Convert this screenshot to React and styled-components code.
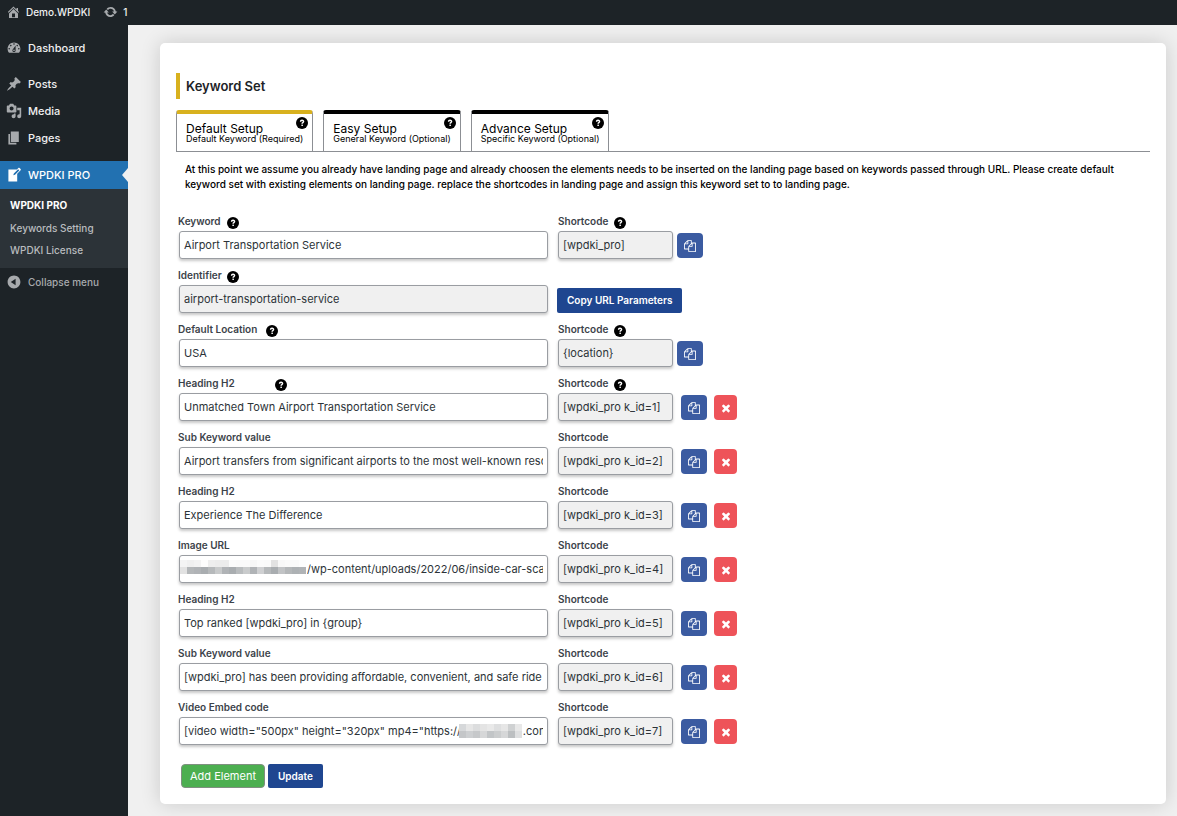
import React from 'react';
import styled, { createGlobalStyle } from 'styled-components';

const icons = {
  home: 'M16 8.5l1.53 1.53-1.06 1.06L10 4.6l-6.47 6.49-1.06-1.06L10 2.5l4 4v-2h2v4zm-6-2.46l6 5.99V18H4v-5.97zM12 17v-5H8v5h4z',
  update:
    'M10.2 3.28c3.53 0 6.43 2.61 6.92 6h2.08l-3.5 4-3.5-4h2.32c-.45-1.97-2.21-3.45-4.32-3.45-1.45 0-2.73.71-3.54 1.78L4.95 5.66C6.23 4.2 8.11 3.28 10.2 3.28zm-.4 13.44c-3.52 0-6.43-2.61-6.92-6H.8l3.5-4c1.17 1.33 2.33 2.67 3.5 4H5.48c.45 1.97 2.21 3.45 4.32 3.45 1.45 0 2.73-.71 3.54-1.78l1.71 1.95c-1.28 1.46-3.15 2.38-5.25 2.38z',
  dashboard:
    'M3.76 16h12.48c1.1-1.37 1.76-3.11 1.76-5 0-4.42-3.58-8-8-8s-8 3.58-8 8c0 1.89.66 3.63 1.76 5zM10 4c.55 0 1 .45 1 1s-.45 1-1 1-1-.45-1-1 .45-1 1-1zM6 6c.55 0 1 .45 1 1s-.45 1-1 1-1-.45-1-1 .45-1 1-1zm8 0c.55 0 1 .45 1 1s-.45 1-1 1-1-.45-1-1 .45-1 1-1zm-5.37 5.55L12 7v6c0 1.1-.9 2-2 2s-2-.9-2-2c0-.57.24-1.08.63-1.45zM4 10c.55 0 1 .45 1 1s-.45 1-1 1-1-.45-1-1 .45-1 1-1zm12 0c.55 0 1 .45 1 1s-.45 1-1 1-1-.45-1-1 .45-1 1-1zm-5 3c0-.55-.45-1-1-1s-1 .45-1 1 .45 1 1 1 1-.45 1-1z',
  post: 'M10.44 3.02l1.82-1.82 6.36 6.35-1.83 1.82c-1.05-.68-2.48-.57-3.41.36l-.75.75c-.92.93-1.04 2.35-.35 3.41l-1.83 1.82-2.41-2.41-2.8 2.79c-.42.42-3.38 2.71-3.8 2.29s1.86-3.39 2.28-3.81l2.79-2.79L4.1 9.36l1.83-1.82c1.05.69 2.48.57 3.4-.36l.75-.75c.93-.92 1.05-2.35.36-3.41z',
  media:
    'M13 11V4c0-.55-.45-1-1-1h-1.67L9 1H5L3.67 3H2c-.55 0-1 .45-1 1v7c0 .55.45 1 1 1h10c.55 0 1-.45 1-1zM7 4.5c1.38 0 2.5 1.12 2.5 2.5S8.38 9.5 7 9.5 4.5 8.38 4.5 7 5.62 4.5 7 4.5zM14 6h5v10.5c0 1.38-1.12 2.5-2.5 2.5S14 17.88 14 16.5s1.12-2.5 2.5-2.5c.17 0 .34.02.5.05V9h-3V6zm-4 8.05V13h2v3.5c0 1.38-1.12 2.5-2.5 2.5S7 17.88 7 16.5 8.12 14 9.5 14c.17 0 .34.02.5.05z',
  page: 'M6 15V2h10v13H6zm-1 1h8v2H3V5h2v11z',
  write:
    'M16.89 1.2l1.41 1.41c.39.39.39 1.02 0 1.41L14 8.33V18H3V3h10.67l1.8-1.8c.4-.39 1.03-.4 1.42 0zm-5.66 8.48l5.37-5.36-1.42-1.42-5.36 5.37-.71 2.12z',
  collapse: 'M10 2c4.42 0 8 3.58 8 8s-3.58 8-8 8-8-3.58-8-8 3.58-8 8-8zm2 12V6l-6 4z',
};

const filesPath =
  'M1696 384q40 0 68 28t28 68v1216q0 40-28 68t-68 28h-960q-40 0-68-28t-28-68v-288h-544q-40 0-68-28t-28-68v-672q0-40 20-88t48-76l408-408q28-28 76-48t88-20h416q40 0 68 28t28 68v328q68-40 128-40h416zm-544 213l-299 299h299v-299zm-640-384l-299 299h299v-299zm196 647l316-316v-416h-384v416q0 40-28 68t-68 28h-416v640h512v-256q0-40 20-88t48-76zm956 804v-1152h-384v416q0 40-28 68t-68 28h-416v640h896z';
const timesPath =
  'M1490 1322q0 40-28 68l-136 136q-28 28-68 28t-68-28l-294-294-294 294q-28 28-68 28t-68-28l-136-136q-28-28-28-68t28-68l294-294-294-294q-28-28-28-68t28-68l136-136q28-28 68-28t68 28l294 294 294-294q28-28 68-28t68 28l136 136q28 28 28 68t-28 68l-294 294 294 294q28 28 28 68z';

const menu = [
  { label: 'Dashboard', icon: 'dashboard', gap: true },
  { label: 'Posts', icon: 'post' },
  { label: 'Media', icon: 'media' },
  { label: 'Pages', icon: 'page' },
];

const tabs = [
  { title: 'Default Setup', sub: 'Default Keyword (Required)', active: true },
  { title: 'Easy Setup', sub: 'General Keyword (Optional)' },
  { title: 'Advance Setup', sub: 'Specific Keyword (Optional)' },
];

const hostMask = {
  left: 1,
  top: 5,
  cell: 7,
  rows: [
    ['#f4f4f4', '#f0f0f0', '#f3f3f3', '#fdfdfd', '#eeeeee', '#ececec', '#ececec', '#fbfbfb', '#fafafa', '#fafafa', '#f7f7f7', '#fbfbfb', '#fafafa', '#e2e2e2', '#f8f8f8', '#fafafa', '#fafafa', '#fdfdfd'],
    ['#e2e2e2', '#b4b7b9', '#b0b3b6', '#a9adb0', '#b6b9bb', '#c8cacb', '#b0b3b6', '#a9adb0', '#b9bcbe', '#c9cbcc', '#b0b3b6', '#cfd0d2', '#b6b9bb', '#a9adb0', '#c1c3c5', '#b4b7b9', '#adb1b4', '#b0b3b6'],
  ],
};
const domainMask = {
  left: 280,
  top: 7,
  cell: 7,
  rows: [
    ['#d6d8da', '#e6e6e6', '#dcddde', '#e4e4e4', '#e9e9e9', '#dedfe0', '#e6e6e6', '#cfd1d2', '#e8e8e8'],
    ['#c4c6c8', '#cdcfd1', '#c6c8ca', '#d6d7d8', '#c2c5c7', '#cbcdce', '#d6d7d8', '#bcbfc1', '#dedfe0'],
  ],
};

const rows = [
  { label: 'Keyword', value: 'Airport Transportation Service', help: 6, code: '[wpdki_pro]', codeHelp: true },
  { label: 'Identifier', value: 'airport-transportation-service', help: 5, readOnly: true, url: true },
  { label: 'Default Location', value: 'USA', help: 9, code: '{location}', codeHelp: true },
  { label: 'Heading H2', value: 'Unmatched Town Airport Transportation Service', help: 40, code: '[wpdki_pro k_id=1]', codeHelp: true, remove: true },
  { label: 'Sub Keyword value', value: 'Airport transfers from significant airports to the most well-known resorts', code: '[wpdki_pro k_id=2]', remove: true },
  { label: 'Heading H2', value: 'Experience The Difference', code: '[wpdki_pro k_id=3]', remove: true },
  { label: 'Image URL', value: '/wp-content/uploads/2022/06/inside-car-scaled.jpg', indent: 127, mask: hostMask, code: '[wpdki_pro k_id=4]', remove: true },
  { label: 'Heading H2', value: 'Top ranked [wpdki_pro] in {group}', code: '[wpdki_pro k_id=5]', remove: true },
  { label: 'Sub Keyword value', value: '[wpdki_pro] has been providing affordable, convenient, and safe ride home', code: '[wpdki_pro k_id=6]', remove: true },
  {
    label: 'Video Embed code',
    value: `[video width="500px" height="320px" mp4="https://${'\u00a0'.repeat(20)}.com/video.mp4"]`,
    mask: domainMask,
    code: '[wpdki_pro k_id=7]',
    remove: true,
  },
];

const Dashicon = ({ name }) => (
  <svg width='16' height='16' viewBox='0 0 20 20' fill='currentColor' aria-hidden='true'>
    <path d={icons[name]} fillRule='evenodd' />
  </svg>
);

const HelpIcon = () => (
  <svg width='12' height='12' viewBox='0 0 12 12' aria-hidden='true'>
    <circle cx='6' cy='6' r='6' fill='#000' />
    <path d='M4.5 4.8c0-2 3.1-1.9 3.1-.3 0 1.1-1.5 1.1-1.5 2.2' fill='none' stroke='#fff' strokeWidth='1.4' />
    <rect x='5.4' y='7.6' width='1.5' height='1.4' fill='#fff' />
  </svg>
);

const Mosaic = ({ mask }) => (
  <MosaicSvg
    $left={mask.left}
    $top={mask.top}
    width={mask.rows[0].length * mask.cell}
    height={mask.rows.length * mask.cell}
    shapeRendering='crispEdges'
    aria-hidden='true'
  >
    {mask.rows.map((row, y) =>
      row.map((fill, x) => (
        <rect key={`${x}-${y}`} x={x * mask.cell} y={y * mask.cell} width={mask.cell} height={mask.cell} fill={fill} />
      ))
    )}
  </MosaicSvg>
);

const FieldRow = ({ row, index }) => (
  <Row>
    <Field>
      <LabelLine $gap={row.help}>
        <label htmlFor={`value-${index}`}>{row.label}</label>
        {row.help && <HelpIcon />}
      </LabelLine>
      <InputBox>
        <TextInput id={`value-${index}`} defaultValue={row.value} readOnly={row.readOnly} $indent={row.indent} />
        {row.mask && <Mosaic mask={row.mask} />}
      </InputBox>
    </Field>
    {row.url ? (
      <BlueButton type='button'>Copy URL Parameters</BlueButton>
    ) : (
      <>
        <CodeField>
          <LabelLine $gap={6}>
            <label htmlFor={`code-${index}`}>Shortcode</label>
            {row.codeHelp && <HelpIcon />}
          </LabelLine>
          <TextInput id={`code-${index}`} defaultValue={row.code} readOnly />
        </CodeField>
        <Actions $wide={row.remove}>
          <CopyButton type='button' aria-label='Copy shortcode'>
            <svg width='12' height='12' viewBox='0 0 1792 1792' fill='currentColor'>
              <path d={filesPath} />
            </svg>
          </CopyButton>
          {row.remove && (
            <RemoveButton type='button' aria-label='Remove element'>
              <svg width='12' height='12' viewBox='0 0 1792 1792' fill='currentColor'>
                <path d={timesPath} />
              </svg>
            </RemoveButton>
          )}
        </Actions>
      </>
    )}
  </Row>
);

const App = () => {
  return (
    <>
      <GlobalStyle />
      <Page>
        <TopBar>
          <TopLink href='#site'>
            <Dashicon name='home' />
            Demo.WPDKI
          </TopLink>
          <TopLink href='#updates'>
            <Dashicon name='update' />1
          </TopLink>
        </TopBar>
        <Body>
          <Sidebar>
            {menu.map((item) => (
              <MenuLink key={item.label} href={`#${item.label}`} $gap={item.gap}>
                <Dashicon name={item.icon} />
                {item.label}
              </MenuLink>
            ))}
            <CurrentLink href='#wpdki'>
              <Dashicon name='write' />
              WPDKI PRO
            </CurrentLink>
            <SubMenu>
              <SubLink href='#pro' $current>
                WPDKI PRO
              </SubLink>
              <SubLink href='#settings'>Keywords Setting</SubLink>
              <SubLink href='#license'>WPDKI License</SubLink>
            </SubMenu>
            <Collapse type='button'>
              <Dashicon name='collapse' />
              Collapse menu
            </Collapse>
          </Sidebar>
          <Content>
            <Card>
              <Title>Keyword Set</Title>
              <Tabs role='tablist'>
                {tabs.map((tab) => (
                  <Tab key={tab.title} type='button' role='tab' aria-selected={!!tab.active} $active={tab.active}>
                    <strong>{tab.title}</strong>
                    <small>{tab.sub}</small>
                    <HelpIcon />
                  </Tab>
                ))}
              </Tabs>
              <Intro>
                At this point we assume you already have landing page and already choosen the elements needs to be
                inserted on the landing page based on keywords passed through URL. Please create default keyword set
                with existing elements on landing page. replace the shortcodes in landing page and assign this keyword
                set to to landing page.
              </Intro>
              <form>
                {rows.map((row, index) => (
                  <FieldRow key={index} row={row} index={index} />
                ))}
                <Footer>
                  <AddButton type='button'>Add Element</AddButton>
                  <BlueButton type='button'>Update</BlueButton>
                </Footer>
              </form>
            </Card>
          </Content>
        </Body>
      </Page>
    </>
  );
};

const GlobalStyle = createGlobalStyle`
  *, *::before, *::after {
    box-sizing: border-box;
  }
  body {
    margin: 0;
    background: #f0f0f0;
    color: #1d2327;
  }
  body, button, input {
    font-family: Inter, 'Liberation Sans', sans-serif;
    font-size: 11px;
  }
  svg {
    flex: none;
  }
  a {
    text-decoration: none;
  }
  button {
    cursor: pointer;
  }
`;
const Page = styled.div`
  display: flex;
  flex-direction: column;
  min-height: 100vh;
`;
const TopBar = styled.header`
  display: flex;
  gap: 13px;
  height: 25px;
  padding: 0 6px;
  background: #1d2327;
`;
const TopLink = styled.a`
  display: flex;
  align-items: center;
  gap: 5px;
  height: 24px;
  color: #f0f0f1;
  font-size: 10px;
  font-weight: 500;
  svg {
    color: #a7aaad;
    width: 15px;
  }
`;
const Body = styled.div`
  display: flex;
  flex: 1;
`;
const Sidebar = styled.nav`
  flex: none;
  width: 128px;
  padding-top: 9px;
  background: #1d2327;
`;
const MenuLink = styled.a`
  display: flex;
  align-items: center;
  gap: 6px;
  height: 27px;
  margin-bottom: ${({ $gap }) => ($gap ? '9px' : '0')};
  padding-left: 6px;
  color: #f0f0f1;
  font-weight: 500;
  svg {
    color: #a7aaad;
  }
`;
const CurrentLink = styled(MenuLink)`
  position: relative;
  height: 28px;
  margin-top: 10px;
  background: #2271b1;
  color: #fff;
  svg {
    color: #fff;
  }
  &::after {
    content: '';
    position: absolute;
    right: 0;
    top: 7px;
    border: 7px solid transparent;
    border-left: 0;
    border-right: 6px solid #f0f0f0;
  }
`;
const SubMenu = styled.div`
  padding: 4px 0 7px;
  background: #2c3338;
`;
const SubLink = styled.a`
  display: block;
  padding-left: 10px;
  color: ${({ $current }) => ($current ? '#fff' : '#b9bcbf')};
  font-size: 10px;
  font-weight: ${({ $current }) => ($current ? 700 : 500)};
  line-height: ${({ $current }) => ($current ? '24px' : '22px')};
`;
const Collapse = styled.button`
  display: flex;
  align-items: center;
  gap: 6px;
  height: 27px;
  padding: 0 0 0 6px;
  border: 0;
  background: none;
  color: #a7aaad;
  font-size: 10px;
  font-weight: 500;
`;
const Content = styled.main`
  flex: 1;
  min-width: 0;
  padding: 18px 11px 12px 32px;
`;
const Card = styled.section`
  padding: 30px 16px 16px;
  border-radius: 5px;
  background: #fff;
  box-shadow: 0 0 20px rgba(0, 0, 0, 0.16);
`;
const Title = styled.h1`
  margin: 0 0 11px;
  padding-left: 6px;
  border-left: 4px solid #d8b11e;
  font-size: 13px;
  font-weight: 600;
  line-height: 26px;
`;
const Tabs = styled.div`
  display: flex;
  gap: 10px;
  border-bottom: 1px solid #8c8f94;
`;
const Tab = styled.button`
  position: relative;
  display: flex;
  flex-direction: column;
  height: 41px;
  margin-bottom: ${({ $active }) => ($active ? '-1px' : '0')};
  padding: 10px 9px 0;
  border: 1px solid #8c8f94;
  border-top: 4px solid ${({ $active }) => ($active ? '#d8b11e' : '#000')};
  border-bottom: 0;
  border-radius: 3px 3px 0 0;
  background: #fff;
  color: #000;
  text-align: left;
  strong {
    font-size: 12px;
    font-weight: 400;
    line-height: 10px;
  }
  small {
    font-size: 9px;
    line-height: 10px;
  }
  svg {
    position: absolute;
    top: 3px;
    right: 4px;
  }
`;
const Intro = styled.p`
  margin: 10px 10px 22px 9px;
  color: #000;
  font-size: 10px;
  font-weight: 500;
  line-height: 15px;
`;
const Row = styled.div`
  display: flex;
  align-items: flex-end;
  margin-bottom: 9px;
`;
const Field = styled.div`
  width: 372px;
  margin-right: 9px;
`;
const LabelLine = styled.div`
  display: flex;
  align-items: center;
  gap: ${({ $gap }) => $gap || 0}px;
  height: 17px;
  padding-left: 2px;
  color: #3c434a;
  font-size: 10px;
  font-weight: 600;
  label {
    padding-bottom: 3px;
  }
`;
const CodeField = styled.div`
  width: 116px;
  padding-left: 1px;
  ${LabelLine} {
    padding-left: 0;
  }
`;
const InputBox = styled.div`
  position: relative;
  padding-left: 3px;
`;
const TextInput = styled.input`
  display: block;
  width: 100%;
  height: 28px;
  padding: 0 4px 0 ${({ $indent }) => $indent || 4}px;
  border: 1px solid #9a9da2;
  border-radius: 3px;
  outline: 0;
  background: ${({ readOnly }) => (readOnly ? '#f0f0f0' : '#fff')};
  box-shadow: 0 2px 3px rgba(0, 0, 0, 0.22);
  color: #2c3338;
`;
const MosaicSvg = styled.svg`
  position: absolute;
  left: ${({ $left }) => $left + 3}px;
  top: ${({ $top }) => $top}px;
`;
const Actions = styled.div`
  display: flex;
  align-items: flex-end;
  gap: 7px;
  padding: 0 0 1px ${({ $wide }) => ($wide ? '8px' : '4px')};
`;
const IconButton = styled.button`
  display: flex;
  align-items: center;
  justify-content: center;
  height: 25px;
  padding: 0;
  border: 0;
  border-radius: 4px;
  color: #fff;
`;
const CopyButton = styled(IconButton)`
  width: 26px;
  background: #3b5ba1;
`;
const RemoveButton = styled(IconButton)`
  width: 23px;
  background: #ee5359;
`;
const BlueButton = styled.button`
  height: 25px;
  padding: 0 10px 1px;
  border: 0;
  border-radius: 2px;
  background: #1f4690;
  color: #fff;
  font-size: 10px;
  font-weight: 600;
`;
const AddButton = styled(BlueButton)`
  padding: 0 8px 1px;
  border: 1px solid #7f9080;
  border-radius: 4px;
  background: #4caf50;
  font-size: 11px;
  font-weight: 400;
`;
const Footer = styled.div`
  display: flex;
  gap: 3px;
  padding: 10px 5px 0;
  button {
    height: 24px;
  }
`;

export default App;
